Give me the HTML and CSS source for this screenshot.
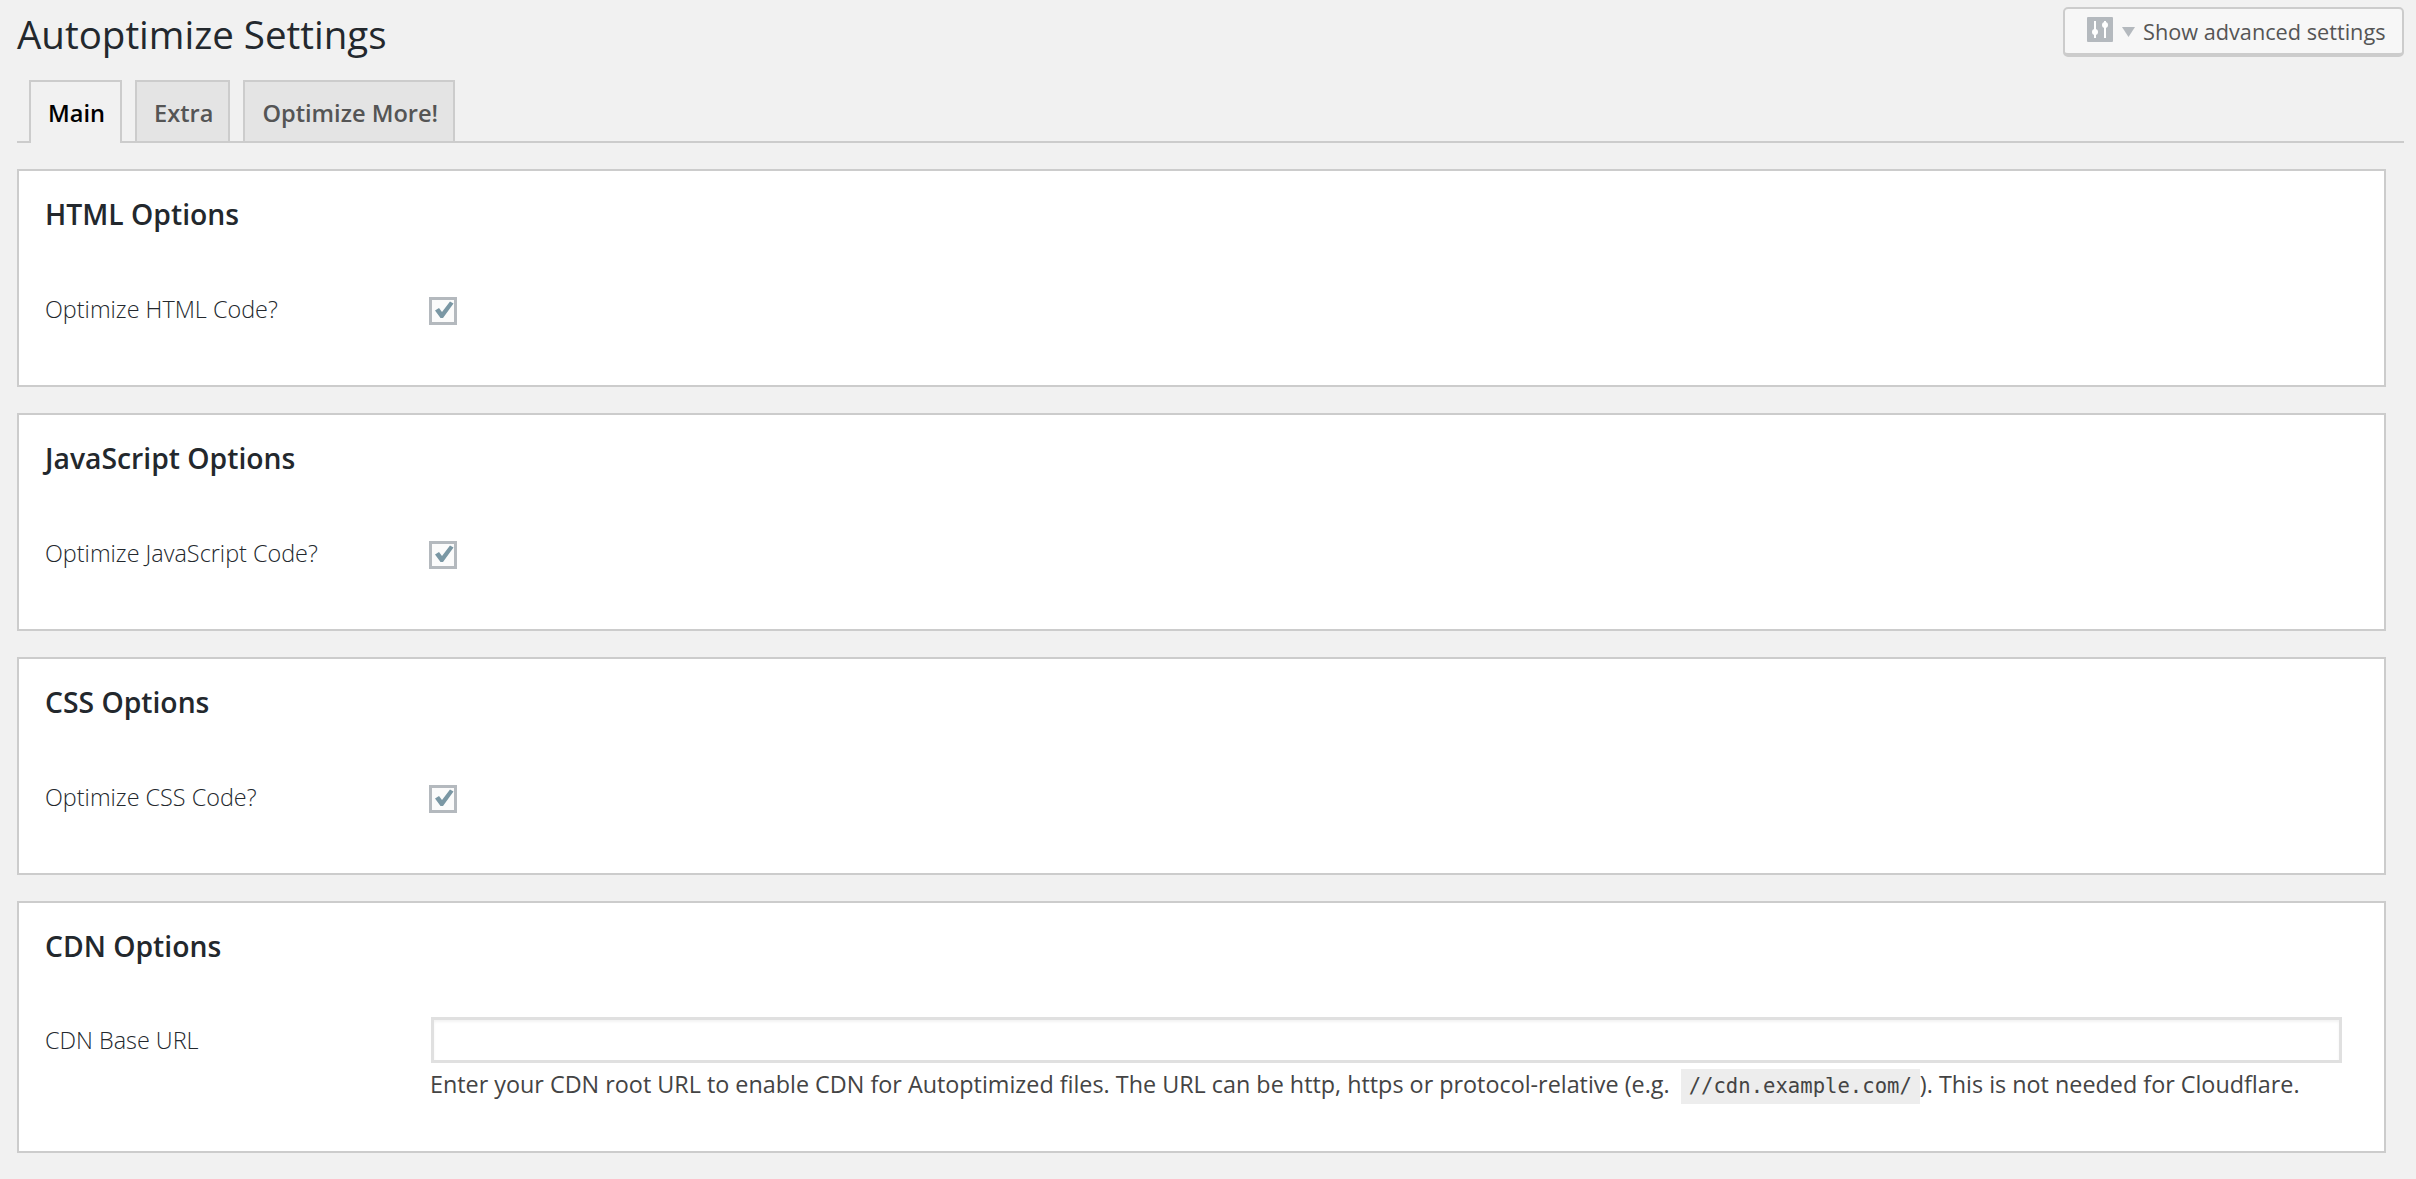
FILE: index.html
```html
<!DOCTYPE html>
<html lang="en">
<head>
<meta charset="utf-8">
<title>Autoptimize Settings</title>
<link rel="stylesheet" href="styles.css">
</head>
<body>
<div class="wrap">
  <header class="top">
    <h1 class="title">Autoptimize Settings</h1>
    <button class="adv" type="button">
      <svg class="adv-icon" viewBox="0 0 26 25" width="26" height="25" aria-hidden="true">
        <rect width="26" height="25" rx="1" fill="#b4b9be"/>
        <path d="M8 4v17M18 4v17" stroke="#fff" stroke-width="2" fill="none"/>
        <circle cx="8" cy="15" r="3" fill="#fff"/>
        <circle cx="18" cy="8" r="3" fill="#fff"/>
      </svg>
      <svg class="adv-caret" viewBox="0 0 13 10" width="13" height="10" aria-hidden="true"><path d="M0 0h13L6.500 10z" fill="#b4b9be"/></svg>
      <span>Show advanced settings</span>
    </button>
  </header>
  <nav class="tabs">
    <a class="tab active">Main</a>
    <a class="tab">Extra</a>
    <a class="tab">Optimize More!</a>
  </nav>
  <section class="panel">
    <h2>HTML Options</h2>
    <div class="row"><label>Optimize HTML Code?</label><span class="check"><svg viewBox="0 0 22 22" width="22" height="22"><path d="M3 10.500L7 8l3 4 8-10.500 3.500 2L11 18H8.500z" fill="#7a97a4"/></svg></span></div>
  </section>
  <section class="panel">
    <h2>JavaScript Options</h2>
    <div class="row"><label>Optimize JavaScript Code?</label><span class="check"><svg viewBox="0 0 22 22" width="22" height="22"><path d="M3 10.500L7 8l3 4 8-10.500 3.500 2L11 18H8.500z" fill="#7a97a4"/></svg></span></div>
  </section>
  <section class="panel">
    <h2>CSS Options</h2>
    <div class="row"><label>Optimize CSS Code?</label><span class="check"><svg viewBox="0 0 22 22" width="22" height="22"><path d="M3 10.500L7 8l3 4 8-10.500 3.500 2L11 18H8.500z" fill="#7a97a4"/></svg></span></div>
  </section>
  <section class="panel panel-cdn">
    <h2>CDN Options</h2>
    <div class="row row-cdn">
      <label>CDN Base URL</label>
      <div class="field">
        <input class="url" type="text">
        <p class="desc">Enter your CDN root URL to enable CDN for Autoptimized files. The URL can be http, https or protocol-relative (e.g. <code>//cdn.example.com/</code>). This is not needed for Cloudflare.</p>
      </div>
    </div>
  </section>
</div>
</body>
</html>
```
FILE: styles.css
```css
* { box-sizing: border-box; }
html, body { margin: 0; padding: 0; background: #f1f1f1; }
body { font-family: "Open Sans", "Noto Sans", sans-serif; color: #444; overflow: hidden; }
.wrap { width: 2387px; margin-left: 17px; }
.top { display: flex; justify-content: space-between; align-items: flex-start; height: 80px; }
.title { margin: 10px 0 0; font-size: 38.500px; line-height: 48px; font-weight: 400; color: #23282d; }
.adv { display: flex; align-items: center; width: 341px; height: 50px; margin-top: 7px; padding: 1px 0 0 22px; background: #f7f7f7; border: 2px solid #ccc; border-bottom-width: 4px; border-radius: 5px; font: inherit; font-size: 21.700px; color: #555; }
.adv-icon { margin-right: 9px; flex: none; margin-top: -4px; }
.adv-caret { margin-right: 8px; flex: none; }
.tabs { display: flex; gap: 13px; height: 63px; padding-left: 12px; border-bottom: 2px solid #ccc; }
.tab { display: block; height: 61px; padding: 0 15px 0 17px; border: 2px solid #ccc; border-bottom: 0; background: #e4e4e4; font-size: 23.600px; font-weight: 600; line-height: 62px; color: #555; }
.tab.active { height: 63px; background: #f1f1f1; color: #000; }
.panel { width: 2369px; height: 218px; margin-top: 26px; padding: 0 26px; background: #fff; border: 2px solid #ccc; }
.panel + .panel { margin-top: 26px; }
.panel-cdn { height: 252px; }
.panel h2 { margin: 0; padding-top: 23px; font-size: 28.300px; line-height: 40px; font-weight: 600; color: #23282d; }
.row { display: grid; grid-template-columns: 385px 1fr; align-items: start; margin-top: 58px; }
.row label { font-size: 23.400px; line-height: 34px; font-weight: 300; color: #23282d; }
.check { display: flex; align-items: center; justify-content: center; width: 28px; height: 28px; margin: 5px 0 0 -1px; border: 3px solid #b4b9be; background: #fbfbfb; }
.row-cdn { margin-top: 51px; }
.row-cdn label { padding-top: 6px; }
.field { min-width: 0; }
.url { display: block; width: 1911px; height: 46px; margin-left: 1px; border: 3px solid #e0e0e0; background: #fff; box-shadow: inset 0 2px 3px rgba(0,0,0,.05); }
.desc { margin: 3px 0 0; font-size: 23.350px; line-height: 36px; color: #444; white-space: nowrap; }
code { display: inline-block; font-family: "DejaVu Sans Mono", monospace; font-size: 20.600px; line-height: 35px; padding: 0 8px; background: #ededed; margin-left: 5px; }
```
